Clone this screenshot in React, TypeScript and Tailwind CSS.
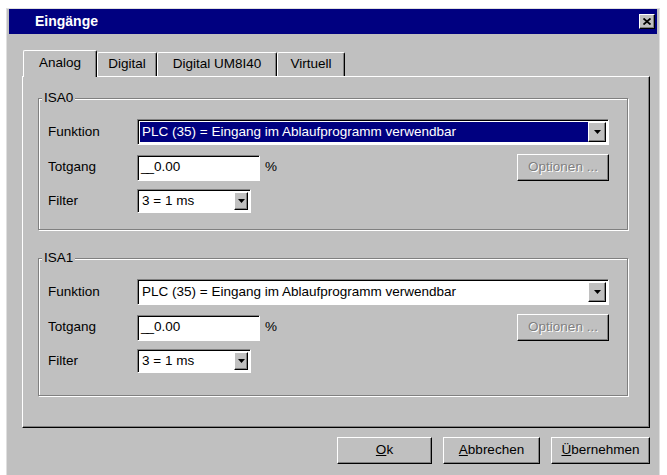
import React from "react";

const raised =
  "border border-t-white border-l-white border-r-black border-b-black shadow-[inset_-1px_-1px_0_#808080]";
const sunken =
  "border border-t-[#808080] border-l-[#808080] border-r-white border-b-white shadow-[inset_1px_1px_0_#000]";

function DropArrow() {
  return (
    <svg width="7" height="4" viewBox="0 0 7 4">
      <path d="M0 0h7L3.5 4z" fill="#000" />
    </svg>
  );
}

function Combo({
  value,
  width,
  height,
  btn,
  selected,
}: {
  value: string;
  width: string;
  height: string;
  btn: string;
  selected?: boolean;
}) {
  return (
    <div className={`${sunken} ${width} ${height} bg-white flex p-[2px]`}>
      <div
        className={`flex-1 flex items-center pl-[2px] ${
          selected ? "bg-[#000080] text-white" : "text-black"
        }`}
      >
        {value}
      </div>
      <div className={`${raised} ${btn} bg-[#c0c0c0] flex items-center justify-center`}>
        <DropArrow />
      </div>
    </div>
  );
}

function Group({
  title,
  height,
  selected,
}: {
  title: string;
  height: string;
  selected?: boolean;
}) {
  return (
    <div
      className={`relative w-[590px] ${height} border border-[#808080] shadow-[inset_1px_1px_0_#fff,1px_1px_0_#fff] pl-[9px] pr-[18px] pt-[20px]`}
    >
      <span className="absolute -top-[9px] left-[3px] px-[2px] bg-[#c0c0c0] leading-[16px]">
        {title}
      </span>
      <div className="flex items-center">
        <span className="w-[89px]">Funktion</span>
        <Combo
          value="PLC (35) = Eingang im Ablaufprogramm verwendbar"
          width="flex-1"
          height="h-[26px]"
          btn="w-[18px]"
          selected={selected}
        />
      </div>
      <div className="flex items-center mt-[9px]">
        <span className="w-[89px]">Totgang</span>
        <div className={`${sunken} w-[123px] h-[26px] bg-white flex items-center pl-[3px]`}>
          <span className="tracking-[-2px]">__</span>
          <span className="ml-[2px]">0.00</span>
        </div>
        <span className="ml-[5px]">%</span>
        <button
          className={`${raised} ml-auto w-[92px] h-[27px] bg-[#c0c0c0] text-[#808080] [text-shadow:1px_1px_0_#fff]`}
        >
          Optionen ...
        </button>
      </div>
      <div className="flex items-center mt-[8px]">
        <span className="w-[89px]">Filter</span>
        <Combo value="3 = 1 ms" width="w-[114px]" height="h-[24px]" btn="w-[14px]" />
      </div>
    </div>
  );
}

const tabs = ["Analog", "Digital", "Digital UM8I40", "Virtuell"];
const tabWidths = ["w-[74px]", "w-[60px]", "w-[120px]", "w-[68px]"];

export default function App() {
  return (
    <div className="w-[667px] h-[475px] bg-white pl-[6px] pt-[8px] overflow-hidden font-['Liberation_Sans',Arial,sans-serif] text-[13.5px] text-black">
      <div className="w-[654px] h-[470px] bg-[#c0c0c0] border-l border-t border-r border-[#dfdfdf] px-[2px] pt-[0px]">
        {/* caption */}
        <div className="h-[25px] bg-[#000080] flex items-center pl-[26px] pr-[2px]">
          <span className="text-white font-bold text-[14px]">Eingänge</span>
          <div
            className={`${raised} ml-auto w-[16px] h-[15px] bg-[#c0c0c0] flex items-center justify-center`}
          >
            <svg width="8" height="7" viewBox="0 0 8 7">
              <path d="M0.5 0.5L7.5 6.5M7.5 0.5L0.5 6.5" stroke="#000" strokeWidth="1.8" />
            </svg>
          </div>
        </div>

        {/* tabs */}
        <div className="ml-[13px] mt-[15px] flex items-end h-[27px] relative z-10">
          {tabs.map((t, i) => (
            <div
              key={t}
              className={`${tabWidths[i]} flex items-center justify-center bg-[#c0c0c0] border-t border-l border-t-white border-l-white border-r border-r-black shadow-[inset_-1px_0_0_#808080] rounded-t-[2px] ${
                i === 0 ? "h-[27px] -mb-[1px] ml-[1px] pb-[1px]" : "h-[24px] pb-[1px]"
              }`}
            >
              {t}
            </div>
          ))}
        </div>

        {/* page */}
        <div className={`${raised} w-[628px] h-[352px] ml-[13px] pl-[15px] pt-[21px]`}>
          <Group title="ISA0" height="h-[132px]" selected />
          <div className="h-[28px]" />
          <Group title="ISA1" height="h-[138px]" />
        </div>

        {/* buttons */}
        <div className="flex justify-end gap-[11px] w-[641px] mt-[9px]">
          <button className={`${raised} w-[95px] h-[27px] bg-[#c0c0c0]`}>
            <span className="underline">O</span>k
          </button>
          <button className={`${raised} w-[97px] h-[27px] bg-[#c0c0c0]`}>
            <span className="underline">A</span>bbrechen
          </button>
          <button className={`${raised} w-[99px] h-[27px] bg-[#c0c0c0]`}>
            <span className="underline">Ü</span>bernehmen
          </button>
        </div>
      </div>
    </div>
  );
}
